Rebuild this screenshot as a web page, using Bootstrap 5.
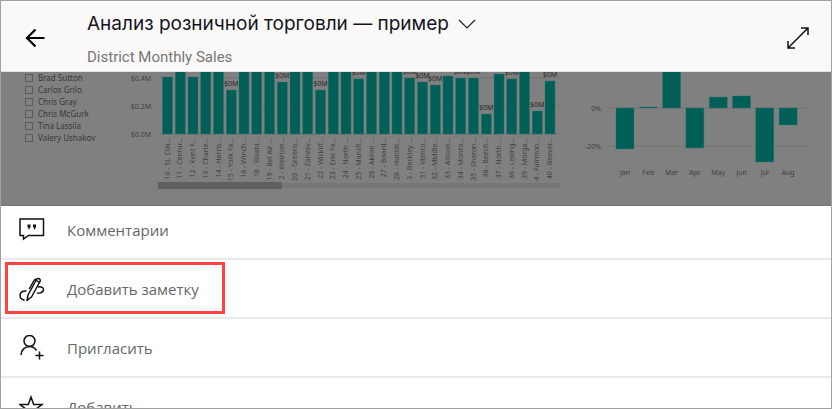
<!DOCTYPE html>
<html lang="ru">
<head>
<meta charset="utf-8">
<meta name="viewport" content="width=device-width, initial-scale=1">
<title>Анализ розничной торговли — пример</title>
<link href="https://cdn.jsdelivr.net/npm/bootstrap@5.3.0/dist/css/bootstrap.min.css" rel="stylesheet">
<style>
  body { font-family: "Open Sans", "Noto Sans", sans-serif; }
  .app-frame { border: 1px solid #a0a0a0; }
  .app-header { background: #faf9f8; padding: 4px 20px 0 22px; border-bottom: 1px solid #dfe5e7; gap: 40px; }
  .report-title { font-family: Inter, sans-serif; font-size: 19px; line-height: 38px; color: #14141f; }
  .report-page { font-family: Roboto, sans-serif; font-size: 15px; line-height: 28px; color: #767676; }
  .report-dim { background: #808080; height: 134px; border-bottom: 1px solid #767676; }
  .slicer { width: 124px; padding-left: 24px; }
  .slicer-item { font-family: "Noto Sans", sans-serif; font-size: 8px; line-height: 12px; height: 12px; gap: 5px; color: #383838; }
  .slicer-item input { appearance: none; width: 8px; height: 8px; margin: 0; border: 1px solid #5c5c5c; background: transparent; }
  .chart-text text { font-family: "Noto Sans", sans-serif; font-size: 7px; fill: #404040; }
  .chart-text .val { fill: #2b2b2b; }
  .action-row { height: 59px; padding: 0 18px; gap: 22px; font-size: 15px; line-height: 24px; color: #666; border-bottom: 2px solid #eaeaea; text-align: left; }
  .action-row-first { height: 54px; padding-bottom: 4px; }
  .marker { left: 4px; top: 2px; width: 220px; height: 52px; border: 3px solid #ff4343; }
</style>
</head>
<body>
<div class="app-frame vh-100 d-flex flex-column overflow-hidden bg-white">
  <header class="app-header d-flex align-items-center flex-shrink-0">
    <button class="btn p-0 border-0 d-flex" type="button" aria-label="Назад">
      <svg width="24" height="24" viewBox="0 0 24 24" fill="none" stroke="#000" stroke-width="2.200"><path d="M21.500 12H4M12.500 3.500 4 12l8.500 8.500"/></svg>
    </button>
    <div class="flex-fill">
      <button class="btn p-0 border-0 d-flex align-items-center gap-2 report-title" type="button">
        <span>Анализ розничной торговли — пример</span>
        <svg width="20" height="20" viewBox="0 0 20 20" fill="none" stroke="#222" stroke-width="1.200"><path d="m2 6 8 8 8-8"/></svg>
      </button>
      <div class="report-page">District Monthly Sales</div>
    </div>
    <button class="btn p-0 border-0 d-flex" type="button" aria-label="Во весь экран">
      <svg width="26" height="26" viewBox="0 0 26 26" fill="none" stroke="#111" stroke-width="1.500"><path d="M3 23 23 3M16 3h7v7M3 16v7h7"/></svg>
    </button>
  </header>

  <main class="report-dim d-flex flex-shrink-0 overflow-hidden">
    <div class="slicer flex-shrink-0">
      <label class="slicer-item d-flex align-items-center"><input type="checkbox">Brad Sutton</label>
      <label class="slicer-item d-flex align-items-center"><input type="checkbox">Carlos Grilo</label>
      <label class="slicer-item d-flex align-items-center"><input type="checkbox">Chris Gray</label>
      <label class="slicer-item d-flex align-items-center"><input type="checkbox">Chris McGurk</label>
      <label class="slicer-item d-flex align-items-center"><input type="checkbox">Tina Lassila</label>
      <label class="slicer-item d-flex align-items-center"><input type="checkbox">Valery Ushakov</label>
    </div>
    <svg id="stores" class="chart-text flex-shrink-0" width="440" height="134" viewBox="0 0 440 134" role="img" aria-label="Sales by store"></svg>
    <svg id="months" class="chart-text flex-shrink-0" width="260" height="134" viewBox="0 0 260 134" role="img" aria-label="Variance by month"></svg>
  </main>

  <nav class="flex-fill overflow-hidden" aria-label="Действия">
    <button class="action-row action-row-first btn rounded-0 border-top-0 border-start-0 border-end-0 w-100 d-flex align-items-center" type="button">
      <svg width="26" height="26" viewBox="0 0 26 26" fill="none" stroke="#111" stroke-width="1.500"><path d="M1 2h23.500v16.500H9.500L4.500 22v-3.500H1z"/><path d="M8.500 7.500h3v2.800L10 12.500h-.8l.5-2H8.500zM14 7.500h3v2.800l-1.500 2.200h-.8l.5-2H14z" fill="#111" stroke="none"/></svg>
      <span>Комментарии</span>
    </button>
    <div class="position-relative">
      <button class="action-row btn rounded-0 border-top-0 border-start-0 border-end-0 w-100 d-flex align-items-center" type="button">
        <svg width="26" height="26" viewBox="0 0 26 26" fill="none" stroke="#111" stroke-width="1.500" stroke-linecap="round" stroke-linejoin="round"><path d="M8 24.500 9 19 17.500 3.500a2 2 0 0 1 3.500 2L12.500 21z"/><path d="M10.500 12.500 15 4.500q.8-1.500 2.300-1M16 3.500l4.500 3"/><path d="M7 15c-4 0-6 2-6 4.500s2 4 4 4.500M19.500 11c3-.5 5 .5 5 2.500s-1.500 3-3.500 3.500c-1.500.3-2 .5-2.500 0"/></svg>
        <span>Добавить заметку</span>
      </button>
      <div class="marker position-absolute pe-none"></div>
    </div>
    <button class="action-row btn rounded-0 border-top-0 border-start-0 border-end-0 w-100 d-flex align-items-center" type="button">
      <svg width="26" height="26" viewBox="0 0 26 26" fill="none" stroke="#111" stroke-width="1.500"><circle cx="10.500" cy="6" r="5.500"/><path d="M2 20c0-5 4-8.500 8.500-8.500 3 0 5.500 1.500 7 4M20.500 16.500v8M16.500 20.500h8"/></svg>
      <span>Пригласить</span>
    </button>
    <button class="action-row btn rounded-0 border-top-0 border-start-0 border-end-0 w-100 d-flex align-items-center" type="button">
      <svg width="26" height="26" viewBox="0 0 26 26" fill="none" stroke="#111" stroke-width="1.500"><path d="m12 3 2.700 7.500H23l-6.500 5 2.500 8-7-5-7 5 2.500-8-6.500-5h8.300z"/></svg>
      <span>Добавить</span>
    </button>
  </nav>
</div>
<script>
  const NS = 'http://www.w3.org/2000/svg';
  function add(svg, tag, attrs, text) {
    const el = document.createElementNS(NS, tag);
    for (const k in attrs) el.setAttribute(k, attrs[k]);
    if (text) el.textContent = text;
    svg.appendChild(el);
  }
  const green = '#005f56';
  const bar = (svg, x, y, w, h) => add(svg, 'rect', { x, y, width: w, height: h, fill: green, stroke: '#2e756f', 'stroke-width': 0.5 });

  // Label, bar height, value label shown
  const stores = [['10 - St. Clai…',57],['11 - Centur…',80],['12 - Kent F…',57],['13 - Charle…',80],['14 - Harris…',80],['15 - York Fa…',44,1],
    ['16 - Winch…',80],['18 - Washi…',80],['19 - Bel Air …',80],['2 - Weirton…',52,1],['20 - Greens…',80],['21 - Zanesv…',80],['22 - Wicklif…',44,1],
    ['23 - Erie Fa…',80],['24 - North …',80],['25 - Mansfi…',55,1],['26 - Akron …',80],['27 - Board…',80],['28 - Huntin…',80],['3 - Beckley …',56,1],
    ['31 - Mento…',52,1],['32 - Middle…',49,1],['33 - Altoon…',58],['34 - Monro…',56,1],['35 - Sharon…',56,1],['36 - Beech…',20,1],['37 - North …',60],
    ['38 - Lexing…',55,1],['39 - Morga…',80],['4 - Fairmon…',23,1],['40 - Beaver…',53,1]];
  const s = document.getElementById('stores');
  [['$0.4M',6],['$0.2M',34],['$0.0M',62]].forEach(([t, y]) => {
    add(s, 'line', { x1: 33, x2: 435, y1: y, y2: y, stroke: '#757575' });
    add(s, 'text', { x: 26, y: y + 3, 'text-anchor': 'end' }, t);
  });
  stores.forEach(([name, h, label], i) => {
    const x = 37.5 + i * 12.75;
    bar(s, x, 62 - h, 10, h);
    if (label) add(s, 'text', { x: x + 5, y: 58 - h, 'text-anchor': 'middle', class: 'val' }, '$0M');
    add(s, 'text', { transform: `translate(${x + 7} 66) rotate(-90)`, 'text-anchor': 'end' }, name);
  });
  add(s, 'rect', { x: 33, y: 111, width: 402, height: 5, fill: '#767676' });
  add(s, 'rect', { x: 33, y: 110, width: 124, height: 7, fill: '#606060' });

  const months = [['Jan',-41],['Feb',1],['Mar',40],['Apr',-40],['May',11],['Jun',12],['Jul',-54],['Aug',-17]];
  const m = document.getElementById('months');
  [['0%',36],['-20%',74]].forEach(([t, y]) => {
    add(m, 'line', { x1: 42, x2: 242, y1: y, y2: y, stroke: '#757575' });
    add(m, 'text', { x: 36, y: y + 3, 'text-anchor': 'end' }, t);
  });
  months.forEach(([name, v], i) => {
    const x = 51 + i * 23.3;
    bar(m, x, v > 0 ? 36 - v : 36, 18, Math.abs(v));
    add(m, 'text', { x: x + 9, y: 103, 'text-anchor': 'middle' }, name);
  });
</script>
<script src="https://cdn.jsdelivr.net/npm/bootstrap@5.3.0/dist/js/bootstrap.bundle.min.js"></script>
</body>
</html>
